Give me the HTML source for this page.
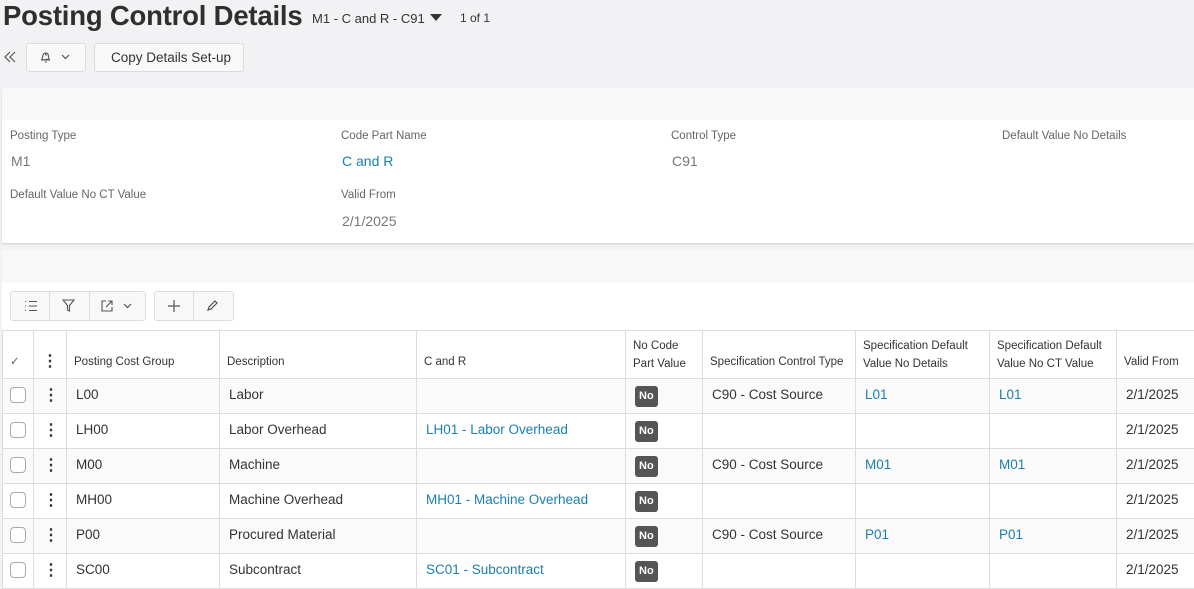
<!DOCTYPE html>
<html><head><style>
*{box-sizing:border-box;margin:0;padding:0}
body{width:1194px;height:585px;overflow:hidden;background:#f2f1f3;font-family:"Liberation Sans",sans-serif;color:#333;position:relative}
.a{position:absolute;white-space:nowrap}
h1{position:absolute;left:3px;top:0px;font-size:27.5px;font-weight:bold;color:#2f2f2f;letter-spacing:-0.2px}
.btn{position:absolute;background:#f8f8f8;border:1px solid #dcdcdc;border-radius:3px}
.lbl{font-size:11.5px;color:#666}
.val{font-size:14px;color:#777}
.link{color:#1a7fb0}
table{position:absolute;left:2px;top:330px;border-collapse:collapse;width:1200px;background:#fff;font-size:13.5px}
td,th{border:1px solid #ddd;padding:0 7px;text-align:left;vertical-align:middle;white-space:nowrap}
td{padding-left:9px}
th{font-weight:normal;font-size:11.5px;color:#333;height:48px;padding-top:14px;line-height:18px}
td{height:35px;padding-bottom:3px}
tr.r td{background:#fafafa}
.no{display:inline-block;background:#555;color:#fff;font-size:11px;font-weight:bold;border-radius:3px;padding:5px 4px;line-height:11px;margin-top:4px}
.cb{display:inline-block;width:16px;height:16px;border:1px solid #aaa;border-radius:4px;background:#fff;vertical-align:middle;margin-left:-2px}
.dots{font-weight:bold;font-size:16px;color:#333}
svg{position:absolute}
</style></head><body>
<h1>Posting Control Details</h1>
<div class="a" style="left:312px;top:11px;font-size:13px;color:#333">M1 - C and R - C91</div>
<div class="a" style="left:430px;top:14px;width:0;height:0;border-left:6px solid transparent;border-right:6px solid transparent;border-top:7px solid #333"></div>
<div class="a" style="left:460px;top:11px;font-size:12px;color:#333">1 of 1</div>
<svg style="left:4px;top:51px" width="12" height="12" viewBox="0 0 12 12" fill="none" stroke="#555" stroke-width="1.2"><path d="M6 1L1 6l5 5M11 1L6 6l5 5"/></svg>
<div class="btn" style="left:26px;top:43px;width:60px;height:29px"></div>
<svg style="left:39px;top:50px" width="13" height="13" viewBox="0 0 13 13" fill="none" stroke="#555" stroke-width="1.1"><path d="M3 10l1-5a3 3 0 0 1 5-1l1 5zM2 10h9M6 3.5l1.5 2M6 12h2"/></svg>
<svg style="left:61px;top:54px" width="9" height="6" viewBox="0 0 9 6" fill="none" stroke="#555" stroke-width="1.2"><path d="M1 1l3.5 3.5L8 1"/></svg>
<div class="btn" style="left:94px;top:43px;width:150px;height:29px"><span class="a" style="left:16px;top:6px;font-size:13.5px;color:#333">Copy Details Set-up</span></div>

<div class="a" style="left:2px;top:88px;width:1192px;height:155px;background:#fff;box-shadow:0 1px 2px rgba(0,0,0,.15)"><div style="height:32px;background:#f8f8f8"></div></div>
<div class="a lbl" style="left:10px;top:130px">Posting Type</div>
<div class="a val" style="left:11px;top:153px">M1</div>
<div class="a lbl" style="left:341px;top:130px">Code Part Name</div>
<div class="a val link" style="left:342px;top:153px">C and R</div>
<div class="a lbl" style="left:671px;top:130px">Control Type</div>
<div class="a val" style="left:672px;top:153px">C91</div>
<div class="a lbl" style="left:1002px;top:130px">Default Value No Details</div>
<div class="a lbl" style="left:10px;top:189px">Default Value No CT Value</div>
<div class="a lbl" style="left:341px;top:189px">Valid From</div>
<div class="a val" style="left:342px;top:213px">2/1/2025</div>

<div class="a" style="left:2px;top:250px;width:1192px;height:335px;background:#fff"><div style="height:33px;background:#f8f8f8"></div></div>
<div class="btn" style="left:10px;top:291px;width:136px;height:30px"></div>
<div class="a" style="left:49px;top:292px;width:1px;height:28px;background:#ddd"></div>
<div class="a" style="left:89px;top:292px;width:1px;height:28px;background:#ddd"></div>
<svg style="left:24px;top:300px" width="14" height="12" viewBox="0 0 14 12" fill="none" stroke="#555" stroke-width="1.1"><path d="M1 1.5h1M1 6h1M1 10.5h1M5 1.5h8M5 6h8M5 10.5h8"/></svg>
<svg style="left:62px;top:299px" width="13" height="13" viewBox="0 0 13 13" fill="none" stroke="#555" stroke-width="1.1"><path d="M1 1h11L7.5 6.5V12L5.5 11V6.5z"/></svg>
<svg style="left:101px;top:300px" width="12" height="12" viewBox="0 0 12 12" fill="none" stroke="#555" stroke-width="1.1"><path d="M5 1H1v10h10V7M7 1h4v4M11 1L5 7"/></svg>
<svg style="left:123px;top:303px" width="9" height="6" viewBox="0 0 9 6" fill="none" stroke="#555" stroke-width="1.2"><path d="M1 1l3.5 3.5L8 1"/></svg>
<div class="btn" style="left:154px;top:291px;width:80px;height:30px"></div>
<div class="a" style="left:193px;top:292px;width:1px;height:28px;background:#ddd"></div>
<svg style="left:167px;top:299px" width="14" height="14" viewBox="0 0 14 14" fill="none" stroke="#555" stroke-width="1.2"><path d="M7 1v12M1 7h12"/></svg>
<svg style="left:207px;top:300px" width="11" height="11" viewBox="0 0 11 11" fill="none" stroke="#555" stroke-width="1.2"><path d="M1 10l1-3 6-6 2 2-6 6z"/></svg>

<table>
<tr><th style="width:31px;color:#666">✓</th><th style="width:32px;text-align:center" class="dots">⋮</th><th style="width:153px">Posting Cost Group</th><th style="width:197px">Description</th><th style="width:209px">C and R</th><th style="width:77px;padding-top:0">No Code<br>Part Value</th><th style="width:153px">Specification Control Type</th><th style="width:134px;padding-top:0">Specification Default<br>Value No Details</th><th style="width:127px;padding-top:0">Specification Default<br>Value No CT Value</th><th>Valid From</th></tr>
<tr class="r"><td><span class="cb"></span></td><td style="text-align:center" class="dots">⋮</td><td>L00</td><td>Labor</td><td></td><td><span class="no">No</span></td><td>C90 - Cost Source</td><td class="link">L01</td><td class="link">L01</td><td>2/1/2025</td></tr>
<tr><td><span class="cb"></span></td><td style="text-align:center" class="dots">⋮</td><td>LH00</td><td>Labor Overhead</td><td class="link">LH01 - Labor Overhead</td><td><span class="no">No</span></td><td></td><td></td><td></td><td>2/1/2025</td></tr>
<tr class="r"><td><span class="cb"></span></td><td style="text-align:center" class="dots">⋮</td><td>M00</td><td>Machine</td><td></td><td><span class="no">No</span></td><td>C90 - Cost Source</td><td class="link">M01</td><td class="link">M01</td><td>2/1/2025</td></tr>
<tr><td><span class="cb"></span></td><td style="text-align:center" class="dots">⋮</td><td>MH00</td><td>Machine Overhead</td><td class="link">MH01 - Machine Overhead</td><td><span class="no">No</span></td><td></td><td></td><td></td><td>2/1/2025</td></tr>
<tr class="r"><td><span class="cb"></span></td><td style="text-align:center" class="dots">⋮</td><td>P00</td><td>Procured Material</td><td></td><td><span class="no">No</span></td><td>C90 - Cost Source</td><td class="link">P01</td><td class="link">P01</td><td>2/1/2025</td></tr>
<tr><td><span class="cb"></span></td><td style="text-align:center" class="dots">⋮</td><td>SC00</td><td>Subcontract</td><td class="link">SC01 - Subcontract</td><td><span class="no">No</span></td><td></td><td></td><td></td><td>2/1/2025</td></tr>
</table>
</body></html>
